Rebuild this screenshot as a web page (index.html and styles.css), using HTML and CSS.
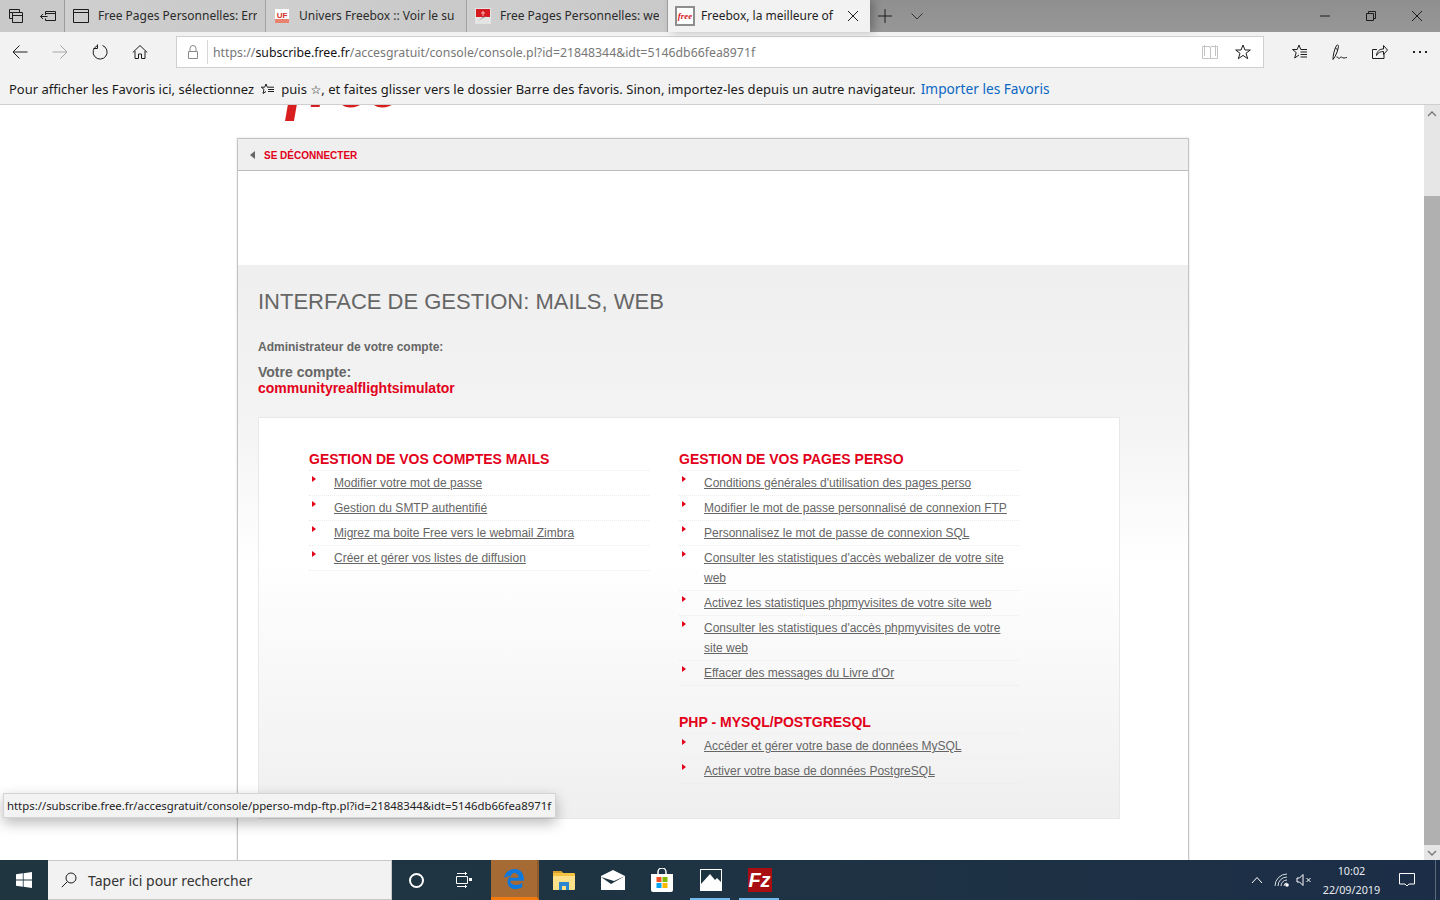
FILE: index.html
```html
<!DOCTYPE html>
<html lang="fr">
<head>
<meta charset="utf-8">
<title>Freebox, la meilleure offre</title>
<link rel="stylesheet" href="styles.css">
</head>
<body>
<div class="screen">
  <header class="titlebar">
    <div class="tabtools">
      <svg class="ic16" viewBox="0 0 16 16"><path d="M1.500 1.500h10v3M1.500 1.500v9h3M4.500 4.500h10v10h-10zM4.500 7.500h10M1.500 4.500h3" class="st"/></svg>
      <svg class="ic16" viewBox="0 0 16 16"><path d="M5.500 3.500h10v9h-10v-2M5.500 3.500v3.500M5.500 5.500h10M7.500 8.500h-7M3 6l-2.500 2.500L3 11" class="st"/></svg>
    </div>
    <div class="tab">
      <svg class="fav" viewBox="0 0 16 16"><path d="M.5 1.500h15v13H.5zM.5 4.500h15" class="st"/></svg>
      <span class="tabtext">Free Pages Personnelles: Err</span>
    </div>
    <div class="tab">
      <svg class="fav" viewBox="0 0 16 16"><rect width="16" height="16" fill="#cfcfcf"/><rect x="1" y="1" width="14" height="14" fill="#fff"/><rect x="1" y="11" width="14" height="4" fill="#e8836f"/><text x="8" y="9.500" class="favuf">UF</text></svg>
      <span class="tabtext">Univers Freebox :: Voir le su</span>
    </div>
    <div class="tab">
      <svg class="fav" viewBox="0 0 16 16"><rect width="16" height="16" fill="#e4e4e4"/><rect x="1" y="1" width="14" height="8" fill="#d61a1f"/><path d="M3 13l5-4 5-1-5 2z" fill="#8a8a8a"/><path d="M8 3v5M6 5h4" stroke="#f5b5b5"/></svg>
      <span class="tabtext">Free Pages Personnelles: we</span>
    </div>
    <div class="tab tab-active">
      <span class="freefav">free</span>
      <span class="tabtext">Freebox, la meilleure of</span>
      <svg class="closex" viewBox="0 0 12 12"><path d="M1 1l10 10M11 1L1 11" class="st"/></svg>
    </div>
    <div class="tabactions">
      <svg class="ic16" viewBox="0 0 16 16"><path d="M8 1v14M1 8h14" class="st"/></svg>
      <svg class="ic16 chevron" viewBox="0 0 16 16"><path d="M2.500 5.500L8 11l5.500-5.500" class="st thin"/></svg>
    </div>
    <div class="winctl">
      <svg class="ic12" viewBox="0 0 12 12"><path d="M1 6h10" class="st"/></svg>
      <svg class="ic12" viewBox="0 0 12 12"><path d="M1.500 3.500h7v7h-7zM3.500 3.500v-2h7v7h-2" class="st"/></svg>
      <svg class="ic12" viewBox="0 0 12 12"><path d="M1 1l10 10M11 1L1 11" class="st"/></svg>
    </div>
  </header>

  <nav class="toolbar">
    <div class="navbtn"><svg class="ic16w" viewBox="0 0 16 16"><path d="M15.500 8H1M7.500 1.500L1 8l6.500 6.500" class="st"/></svg></div>
    <div class="navbtn off"><svg class="ic16w" viewBox="0 0 16 16"><path d="M.5 8H15M8.500 1.500L15 8l-6.500 6.500" class="st"/></svg></div>
    <div class="navbtn"><svg class="ic16w" viewBox="0 0 16 16"><path d="M5 1.800A7 7 0 1 0 10.500 1.500M5.500 .5v4h-4" class="st"/></svg></div>
    <div class="navbtn"><svg class="ic16w" viewBox="0 0 16 16"><path d="M.8 8.500L8 1.500l7.200 7M3 7v7.500h3.500V10h3v4.500H13V7" class="st"/></svg></div>
    <div class="urlbox">
      <svg class="lock" viewBox="0 0 12 14"><path d="M1.500 6.500h9v7h-9zM3 6.500V3.500a3 3 0 0 1 6 0v3" class="st grey"/></svg>
      <span class="urlsep"></span>
      <span class="urltext">https://<b class="host">subscribe.free.fr</b>/accesgratuit/console/console.pl?id=21848344&amp;idt=5146db66fea8971f</span>
      <svg class="book" viewBox="0 0 16 16"><path d="M.5 2.500h6.500q1.500 0 1.500 1.500v10.500h-8zM15.500 2.500H9q-.5 0-.5 1.500M15.500 2.500v12h-7M2.500 1v11M13.500 1v11" class="st pale"/></svg>
      <svg class="star" viewBox="0 0 16 16"><path d="M8 1l2 5h5.300l-4.300 3.300 1.700 5.400L8 11.400l-4.700 3.300L5 9.300.7 6H6z" class="st"/></svg>
    </div>
    <div class="navright">
      <div class="navbtn"><svg class="ic16w" viewBox="0 0 16 16"><path d="M7 1L8.800 5.500H15M7 1L5.200 5.500H.5l3.700 3L2.700 14 7 11M8.500 8H15M8.500 10.500H15M8.500 13H15" class="st"/></svg></div>
      <div class="navbtn"><svg class="ic16w" viewBox="0 0 16 16"><path d="M1 15.500C1 12 2 6 4.500 1.500c.5-1 2.300-.5 2 .8C6 6 4 12 1 15.500zM3.500 4.500l2.300 1M4.500 13c1-1 1.500 1.500 2.500 1.500s1-1.500 2-1.500 1.500 1 3 1 1.500-.5 3-.5" class="st"/></svg></div>
      <div class="navbtn"><svg class="ic16w" viewBox="0 0 16 16"><path d="M5 5.500H.5V14.500H12V10M4.500 11.500c.5-4.500 3-6.500 7-6.500V1.500l4 4.500-4 4.500V7.500c-3 0-5.500 1-7 4z" class="st"/></svg></div>
      <div class="navbtn dots"><i></i><i></i><i></i></div>
    </div>
  </nav>

  <div class="favbar">
    <span>Pour afficher les Favoris ici, sélectionnez</span>
    <svg class="favhint" viewBox="0 0 14 12"><path d="M5 1l1.300 3.200H13M5 1L3.700 4.200H.3l2.700 2.300-1 4L5 8.500M7 6.500h6M7 8.500h6" class="st"/></svg>
    <span class="fav-rest">puis <span class="starglyph">☆</span>, et faites glisser vers le dossier Barre des favoris. Sinon, importez-les depuis un autre navigateur.</span>
    <a class="favlink" href="#">Importer les Favoris</a>
  </div>

  <div class="main">
    <div class="viewport">
      <div class="logo">free</div>
      <section class="card">
        <div class="cardhead"><span class="backarrow"></span><a class="logout" href="#">SE DÉCONNECTER</a></div>
        <div class="blank"></div>
        <div class="content">
          <h1>INTERFACE DE GESTION: MAILS, WEB</h1>
          <p class="admin">Administrateur de votre compte:</p>
          <p class="account">Votre compte:<br><strong>communityrealflightsimulator</strong></p>
          <div class="panel">
            <div class="col">
              <h2>GESTION DE VOS COMPTES MAILS</h2>
              <ul>
                <li><a href="#">Modifier votre mot de passe</a></li>
                <li><a href="#">Gestion du SMTP authentifié</a></li>
                <li><a href="#">Migrez ma boite Free vers le webmail Zimbra</a></li>
                <li><a href="#">Créer et gérer vos listes de diffusion</a></li>
              </ul>
            </div>
            <div class="col">
              <h2>GESTION DE VOS PAGES PERSO</h2>
              <ul>
                <li><a href="#">Conditions générales d'utilisation des pages perso</a></li>
                <li><a href="#">Modifier le mot de passe personnalisé de connexion FTP</a></li>
                <li><a href="#">Personnalisez le mot de passe de connexion SQL</a></li>
                <li><a href="#">Consulter les statistiques d'accès webalizer de votre site web</a></li>
                <li><a href="#">Activez les statistiques phpmyvisites de votre site web</a></li>
                <li><a href="#">Consulter les statistiques d'accès phpmyvisites de votre site web</a></li>
                <li><a href="#">Effacer des messages du Livre d'Or</a></li>
              </ul>
              <h2 class="second">PHP - MYSQL/POSTGRESQL</h2>
              <ul>
                <li><a href="#">Accéder et gérer votre base de données MySQL</a></li>
                <li><a href="#">Activer votre base de données PostgreSQL</a></li>
              </ul>
            </div>
          </div>
        </div>
        <div class="cardfoot"></div>
      </section>
    </div>
    <div class="scrollbar">
      <div class="sbtn"><svg viewBox="0 0 10 6" class="sarrow"><path d="M1 5l4-4 4 4" class="st sgrey"/></svg></div>
      <div class="sgap"></div>
      <div class="thumb"></div>
      <div class="sbtn sdown"><svg viewBox="0 0 10 6" class="sarrow"><path d="M1 1l4 4 4-4" class="st sgrey"/></svg></div>
    </div>
    <div class="tooltip">https://subscribe.free.fr/accesgratuit/console/pperso-mdp-ftp.pl?id=21848344&amp;idt=5146db66fea8971f</div>
  </div>

  <footer class="taskbar">
    <div class="start"><svg class="winlogo" viewBox="0 0 16 16"><path d="M0 2.300l6.800-1v6.300H0zM7.600 1.200L16 0v7.600H7.600zM0 8.400h6.800v6.300l-6.800-1zM7.600 8.400H16V16l-8.400-1.200z" fill="#fff"/></svg></div>
    <div class="search">
      <svg class="lens" viewBox="0 0 16 16"><circle cx="10" cy="6" r="5" class="st"/><path d="M6.300 9.700L.8 15.200" class="st"/></svg>
      <span>Taper ici pour rechercher</span>
    </div>
    <div class="tb tb-cortana"><span class="ring"></span></div>
    <div class="tb tb-view"><svg class="ic16" viewBox="0 0 16 16"><path d="M1 1.500h10M9.500 0v3M1 14.500h10M9.500 13v3M.5 4.500h11v7H.5z" class="stw"/><rect x="13" y="6" width="3" height="3" fill="#fff"/></svg></div>
    <div class="tb tb-edge"><svg class="edgeic" viewBox="0 0 24 24"><path fill-rule="evenodd" d="M1 11C2 5 7 1 13 1c6 0 10 5 10 12v1H8c0 5 8 6 13 2v5c-7 4-16 2-16-6 0-3 1.500-5 4-6.500C6 9 3 9.500 1 11zM8 10.500h9c0-3-2-5-4.500-5S8.500 7.500 8 10.500z" fill="#0f78dc"/></svg></div>
    <div class="tb"><svg class="ic22" viewBox="0 0 22 20"><path d="M0 1h8l2 2h11a1 1 0 0 1 1 1v15H0z" fill="#f6c244"/><path d="M0 1h8l2 2H0z" fill="#d79e2c"/><path d="M0 6h22v13a1 1 0 0 1-1 1H0z" fill="#fce08a"/><path d="M6 12h10v8h-3v-4H9v4H6z" fill="#2a86d0"/></svg></div>
    <div class="tb"><svg class="ic24" viewBox="0 0 24 20"><path d="M0 6L12 0l12 6v14H0z" fill="#fff"/><path d="M0 7l10 7 14-8-11 5z" fill="#1d3340"/></svg></div>
    <div class="tb"><svg class="ic24 bag" viewBox="0 0 24 24"><path d="M8 6V4a4 4 0 0 1 8 0v2" fill="none" stroke="#fff" stroke-width="1.500"/><path d="M1 6h22v16a2 2 0 0 1-2 2H3a2 2 0 0 1-2-2z" fill="#fff"/><rect x="6.500" y="9" width="5" height="5" fill="#f25022"/><rect x="12.500" y="9" width="5" height="5" fill="#7fba00"/><rect x="6.500" y="15" width="5" height="5" fill="#00a4ef"/><rect x="12.500" y="15" width="5" height="5" fill="#ffb900"/></svg></div>
    <div class="tb on"><svg class="ic22t" viewBox="0 0 22 22"><path d="M0 0h22v22H0z" fill="#fff"/><path d="M1 1h20v12l-4-4-2 2-5-6-9 10z" fill="#1d3340"/></svg></div>
    <div class="tb on"><span class="fz">Fz</span></div>
    <div class="tray">
      <div class="tr tr-chev"><svg class="trayic" viewBox="0 0 12 8"><path d="M1 7l5-5.500L11 7" class="stw"/></svg></div>
      <div class="tr tr-wifi"><svg class="trayic14" viewBox="0 0 16 14"><path d="M1 13A12 12 0 0 1 13 1M4 13a9 9 0 0 1 9-9M7 13a6 6 0 0 1 6-6M10 13a3 3 0 0 1 3-3" class="stw thinw"/><circle cx="13" cy="12" r="1.800" fill="#fff"/></svg></div>
      <div class="tr tr-sound"><svg class="trayic14" viewBox="0 0 16 14"><path d="M1 5h2.500L7 1.500v11L3.500 9H1zM10.500 5l4 4M14.500 5l-4 4" class="stw"/></svg></div>
      <div class="clock"><span>10:02</span><span>22/09/2019</span></div>
      <div class="tr tr-notif"><svg class="notif" viewBox="0 0 16 16"><path d="M.5 1.500h15v10.500h-5.500L8 14l-2-2H.5z" class="stw"/></svg></div>
      <div class="desk"></div>
    </div>
  </footer>
</div>
</body>
</html>
```
FILE: styles.css
```css
* { box-sizing: border-box; }
html, body { margin: 0; padding: 0; }
body { width: 1440px; height: 900px; overflow: hidden; font-family: "Liberation Sans", Arial, sans-serif; background: #fff; }
.screen { width: 1440px; height: 900px; display: flex; flex-direction: column; overflow: hidden; }
.st { fill: none; stroke: #1c1c1c; stroke-width: 1; }
.st.thin { stroke: #333; }
.st.grey { stroke: #8a8a8a; }
.st.pale { stroke: #c4c4c4; }
.st.sgrey { stroke: #777; stroke-width: 1.3; }
.stw { fill: none; stroke: #fff; stroke-width: 1; }
.stw.thinw { stroke: #d8dde2; }

/* title bar */
.titlebar { height: 32px; flex: none; display: flex; background: linear-gradient(#8f8f8f, #979797); font-family: "Noto Sans", sans-serif; font-size: 12px; color: #2b2b2b; }
.tabtools { width: 65px; display: flex; align-items: center; gap: 16px; padding-left: 8px; background: #c9c9c9; border-right: 1px solid #9c9c9c; }
.ic16 { width: 16px; height: 16px; flex: none; }
.ic12 { width: 12px; height: 12px; flex: none; }
.tab { width: 201px; display: flex; align-items: center; padding-left: 8px; background: linear-gradient(90deg, #cfcfcf, #c9c9c9); border-right: 1px solid #a2a2a2; overflow: hidden; }
.fav { width: 16px; height: 16px; flex: none; margin-right: 9px; }
.favuf { font: bold 8px "Liberation Sans", sans-serif; fill: #d8322c; text-anchor: middle; }
.tabtext { white-space: nowrap; overflow: hidden; width: 159px; padding-bottom: 2px; }
.tab-active { width: 202px; background: #f2f2f2; border-right: 0; color: #1f1f1f; padding-left: 7px; box-shadow: 4px 0 8px rgba(0,0,0,.25); position: relative; }
.tab-active .tabtext { width: 134px; margin-left: -1px; margin-right: 1px; }
.freefav { width: 20px; height: 20px; flex: none; margin-right: 7px; border: 2px solid #8e8e8e; background: #fff; color: #d8181f; font: italic bold 9px/16px "Liberation Serif", serif; text-align: center; }
.closex { width: 12px; height: 12px; margin-left: 11px; flex: none; }
.tabactions { display: flex; align-items: center; gap: 16px; padding-left: 7px; }
.winctl { margin-left: auto; display: flex; align-items: center; gap: 34px; padding-right: 17px; }

/* toolbar */
.toolbar { height: 40px; flex: none; display: flex; align-items: center; background: #f2f2f2; font-family: "Noto Sans", sans-serif; }
.navbtn { width: 40px; height: 40px; display: flex; align-items: center; justify-content: center; flex: none; }
.navbtn.off { opacity: .35; }
.ic16w { width: 16px; height: 16px; }
.urlbox { width: 1088px; height: 32px; margin-left: 16px; display: flex; align-items: center; background: #fff; border: 1px solid #cfcfcf; padding-left: 10px; }
.lock { width: 12px; height: 14px; flex: none; }
.urlsep { width: 1px; height: 24px; background: #d6d6d6; margin: 0 5px 0 8px; flex: none; }
.urltext { font-size: 12.3px; color: #777; white-space: nowrap; flex: 1; }
.host { font-weight: 400; color: #111; }
.book { width: 16px; height: 16px; flex: none; margin-right: 17px; }
.star { width: 16px; height: 16px; flex: none; margin-right: 12px; }
.navright { display: flex; margin-left: 16px; }
.dots { gap: 4px; }
.dots i { width: 2px; height: 2px; background: #222; }

/* favourites bar */
.favbar { height: 33px; flex: none; display: flex; align-items: center; padding: 1px 0 0 9px; background: #f2f2f2; border-bottom: 1px solid #cfcfcf; font-family: "Noto Sans", sans-serif; font-size: 13px; color: #1a1a1a; white-space: nowrap; }
.favhint { width: 14px; height: 12px; margin: 0 6px 0 7px; flex: none; }
.fav-rest { margin-right: 5px; letter-spacing: .04px; }
.starglyph { font-family: "DejaVu Sans", sans-serif; font-size: 12px; font-weight: bold; color: #111; }
.favlink { color: #0a67c2; text-decoration: none; font-size: 13.7px; }

/* main */
.main { flex: 1; min-height: 0; display: flex; position: relative; }
.viewport { flex: 1; min-width: 0; overflow: hidden; background: #fff; }
.logo { height: 0; margin: -21px 0 54px 285px; font: italic bold 68px/0 "Liberation Serif", serif; letter-spacing: 1.5px; color: #d81e1e; }
.card { width: 952px; margin-left: 237px; border: 1px solid #c4c4c4; border-width: 1px 1px 0 1px; box-shadow: 0 0 2px rgba(0,0,0,.15); background: #fff; }
.cardhead { height: 32px; display: flex; align-items: center; background: #efefef; border-bottom: 1px solid #bbb; padding: 1px 0 0 12px; }
.backarrow { width: 0; height: 0; border: 4px solid transparent; border-right: 5px solid #666; border-left: 0; margin-right: 9px; }
.logout { font-size: 10px; font-weight: bold; color: #e2001a; text-decoration: none; }
.blank { height: 94px; }
.content { background: linear-gradient(#efefef, #f3f3f3 150px, #fff 300px); padding: 23px 0 0 20px; color: #666; }
h1 { margin: 0; font-size: 22px; line-height: 28px; font-weight: 400; color: #666; }
.admin { margin: 23px 0 0; font-size: 12px; line-height: 16px; font-weight: bold; }
.account { margin: 9px 0 0; font-size: 14px; line-height: 16px; font-weight: bold; }
.account strong { color: #e2001a; }
.panel { width: 862px; height: 402px; margin-top: 21px; display: flex; gap: 30px; padding: 32px 0 0 50px; background: linear-gradient(#fff, #fff 35%, #efefef); border: 1px solid #e8e8e8; }
.col { width: 340px; }
h2 { margin: 0; font-size: 14px; line-height: 18px; padding-bottom: 2px; font-weight: bold; color: #e2001a; border-bottom: 1px dotted #ececec; }
h2.second { margin-top: 27px; }
ul { list-style: none; margin: 0; padding: 0; }
li { position: relative; padding: 2px 10px 2px 25px; font-size: 12px; line-height: 20px; border-bottom: 1px dotted #ececec; }
li::before { content: ""; position: absolute; left: 3px; top: 5px; border: 3px solid transparent; border-left: 4px solid #e2001a; border-right: 0; }
li a { color: #666; text-decoration: underline; }
.cardfoot { height: 60px; }

/* scrollbar */
.scrollbar { width: 16px; flex: none; display: flex; flex-direction: column; background: #e6e6e6; }
.sbtn { height: 17px; display: flex; align-items: center; justify-content: center; flex: none; }
.sdown { height: 15px; }
.sarrow { width: 10px; height: 6px; }
.sgap { height: 74px; flex: none; }
.thumb { flex: 1; background: #b0b0b0; }

/* tooltip */
.tooltip { position: absolute; left: 3px; top: 688px; width: 553px; height: 25px; padding-left: 3px; background: #f3f3f3; border: 1px solid #d4d4d4; font: 11.37px/24px "Noto Sans", sans-serif; color: #222; white-space: nowrap; box-shadow: 0 5px 14px rgba(0,0,0,.28); }

/* taskbar */
.taskbar { height: 40px; flex: none; display: flex; background: linear-gradient(90deg, #1f3640, #1e3343 50%, #1c2e47); color: #fff; }
.start { width: 48px; display: flex; align-items: center; justify-content: center; }
.winlogo { width: 16px; height: 16px; }
.search { width: 344px; display: flex; align-items: center; padding-left: 13px; background: #f2f2f2; border: 1px solid #c8c8c8; border-width: 1px 1px 1px 0; color: #333; font: 14px "Noto Sans", sans-serif; }
.lens { width: 16px; height: 16px; margin-right: 11px; flex: none; }
.tb { width: 49px; display: flex; align-items: center; justify-content: center; position: relative; flex: none; }
.tb-cortana { width: 48px; }
.tb-view { width: 51px; padding-right: 3px; }
.ring { width: 15px; height: 15px; border: 2px solid #fff; border-radius: 50%; }
.tb-edge { width: 48px; background: #a66a35; border-bottom: 3px solid #f27a0c; border-right: 2px solid #8e5a2c; }
.edgeic { width: 22px; height: 22px; }
.ic22 { width: 22px; height: 20px; }
.ic24 { width: 24px; height: 20px; }
.bag { height: 24px; }
.ic22t { width: 22px; height: 22px; }
.on::after { content: ""; position: absolute; left: 4px; right: 5px; bottom: 0; height: 2px; background: #76b9ed; }
.fz { width: 24px; height: 24px; background: #a80d10; color: #fff; font: italic bold 20px/24px "Liberation Sans", sans-serif; text-align: center; }
.tray { margin-left: auto; width: 195px; display: flex; align-items: center; }
.tr { display: flex; align-items: center; justify-content: center; flex: none; height: 40px; }
.tr-chev { width: 24px; }
.tr-wifi { width: 26px; }
.tr-sound { width: 18px; }
.trayic { width: 12px; height: 8px; }
.trayic14 { width: 16px; height: 14px; }
.clock { width: 77px; flex: none; display: flex; flex-direction: column; align-items: center; font: 10.8px/19px "Noto Sans", sans-serif; color: #e8ecef; }
.tr-notif { width: 34px; }
.notif { width: 16px; height: 16px; }
.desk { margin-left: 11px; width: 1px; height: 40px; background: #5c6a78; }
```
